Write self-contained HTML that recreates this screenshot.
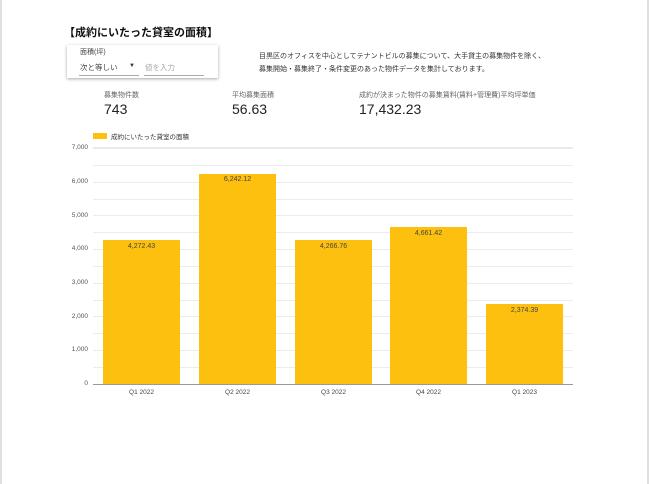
<!DOCTYPE html>
<html><head><meta charset="utf-8"><style>
body{margin:0;width:650px;height:484px;background:#fff;position:relative;overflow:hidden;font-family:"Liberation Sans","Noto Sans CJK JP",sans-serif;color:#222}
.a{position:absolute;white-space:nowrap}
.g{position:absolute;left:93px;width:480px;height:1px;background:#ececec}
.bar{position:absolute;background:#fdc00f;width:77px}
.v{position:absolute;width:77px;text-align:center;font-size:7px;color:#444}
.yl{position:absolute;right:562px;font-size:6.5px;color:#555}
.xl{position:absolute;width:77px;text-align:center;font-size:6.5px;color:#444;top:389px}
</style></head><body>
<div class="a" style="left:0;top:0;width:2px;height:484px;background:#e0e0e0"></div>
<div class="a" style="left:647px;top:0;width:2px;height:484px;background:#e0e0e0"></div>
<div class="a" style="left:64px;top:24px;font-size:11px;font-weight:bold;color:#111">【成約にいたった貸室の面積】</div>
<div class="a" style="left:67px;top:45px;width:151px;height:33px;background:#fff;box-shadow:0 1px 3px rgba(0,0,0,.35)"></div>
<div class="a" style="left:80px;top:47px;font-size:7px;color:#444">面積(坪)</div>
<div class="a" style="left:80px;top:62px;font-size:7.5px;color:#444">次と等しい</div>
<div class="a" style="left:129px;top:63px;font-size:6px;color:#333">▼</div>
<div class="a" style="left:79px;top:75px;width:60px;height:1px;background:#aaa"></div>
<div class="a" style="left:145px;top:62px;font-size:7.5px;color:#aaa">値を入力</div>
<div class="a" style="left:144px;top:75px;width:60px;height:1px;background:#aaa"></div>
<div class="a" style="left:259px;top:50px;font-size:7px;color:#333;line-height:13px">目黒区のオフィスを中心としてテナントビルの募集について、大手貸主の募集物件を除く、<br>募集開始・募集終了・条件変更のあった物件データを集計しております。</div>
<div class="a" style="left:104px;top:90px;font-size:7px;color:#666">募集物件数</div>
<div class="a" style="left:104px;top:101px;font-size:14px;color:#222">743</div>
<div class="a" style="left:232px;top:90px;font-size:7px;color:#666">平均募集面積</div>
<div class="a" style="left:232px;top:101px;font-size:14px;color:#222">56.63</div>
<div class="a" style="left:359px;top:90px;font-size:7px;color:#666">成約が決まった物件の募集賃料(賃料+管理費)平均坪単価</div>
<div class="a" style="left:359px;top:101px;font-size:14px;color:#222">17,432.23</div>
<div class="a" style="left:93px;top:133px;width:14px;height:6px;background:#fdc00f"></div>
<div class="a" style="left:111px;top:131px;font-size:6.5px;color:#333">成約にいたった貸室の面積</div>
<div class="a" style="left:93px;top:147px;width:480px;height:1px;background:#e8e8e8"></div>
<div class="g" style="top:148px"></div><div class="g" style="top:165px"></div><div class="g" style="top:182px"></div><div class="g" style="top:199px"></div><div class="g" style="top:215px"></div><div class="g" style="top:232px"></div><div class="g" style="top:249px"></div><div class="g" style="top:266px"></div><div class="g" style="top:283px"></div><div class="g" style="top:300px"></div><div class="g" style="top:316px"></div><div class="g" style="top:333px"></div><div class="g" style="top:350px"></div><div class="g" style="top:367px"></div>
<div class="yl" style="top:144px">7,000</div><div class="yl" style="top:178px">6,000</div><div class="yl" style="top:212px">5,000</div><div class="yl" style="top:245px">4,000</div><div class="yl" style="top:279px">3,000</div><div class="yl" style="top:313px">2,000</div><div class="yl" style="top:346px">1,000</div><div class="yl" style="top:380px">0</div>
<div class="bar" style="left:103px;top:240px;height:144px"></div><div class="v" style="left:103px;top:243px">4,272.43</div>
<div class="bar" style="left:199px;top:174px;height:210px"></div><div class="v" style="left:199px;top:176px">6,242.12</div>
<div class="bar" style="left:295px;top:240px;height:144px"></div><div class="v" style="left:295px;top:243px">4,266.76</div>
<div class="bar" style="left:390px;top:227px;height:157px"></div><div class="v" style="left:390px;top:230px">4,661.42</div>
<div class="bar" style="left:486px;top:304px;height:80px"></div><div class="v" style="left:486px;top:307px">2,374.39</div>
<div class="a" style="left:93px;top:384px;width:480px;height:1px;background:#999"></div>
<div class="xl" style="left:103px">Q1 2022</div><div class="xl" style="left:199px">Q2 2022</div><div class="xl" style="left:295px">Q3 2022</div><div class="xl" style="left:390px">Q4 2022</div><div class="xl" style="left:486px">Q1 2023</div>
</body></html>
